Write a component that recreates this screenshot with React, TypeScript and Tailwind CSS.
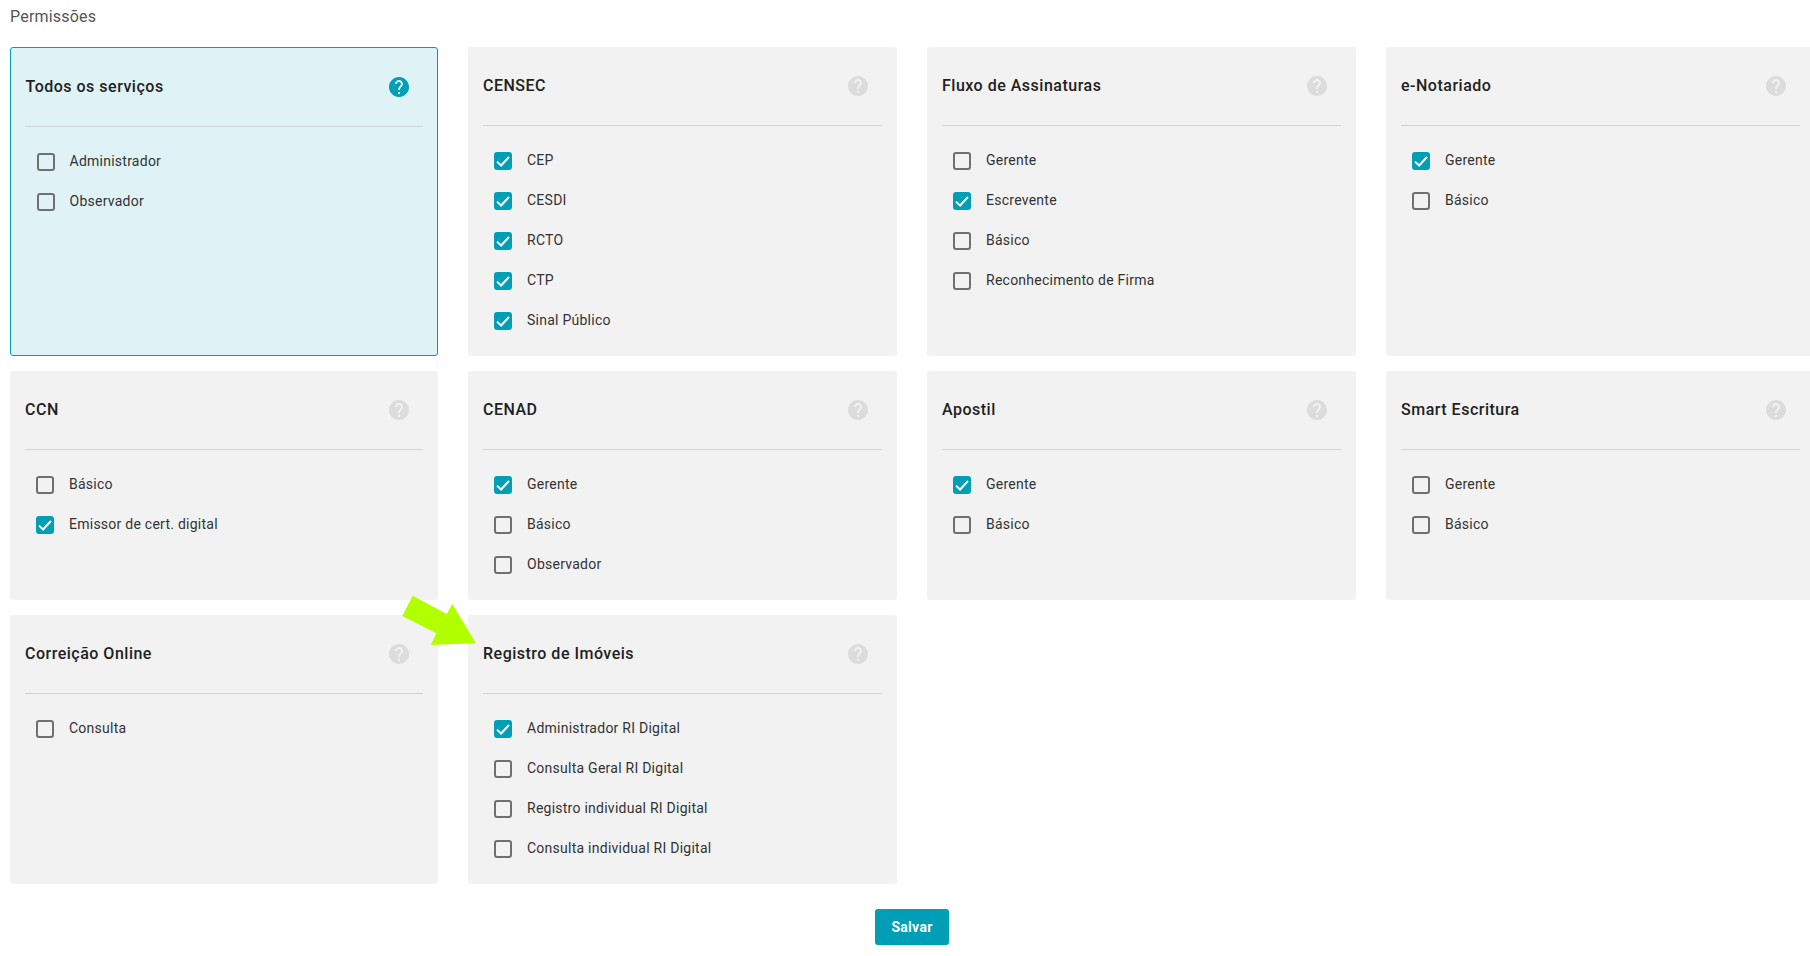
const helpIcon = "M12 2C6.48 2 2 6.48 2 12s4.48 10 10 10 10-4.48 10-10S17.52 2 12 2zm1 17h-2v-2h2v2zm2.07-7.75l-.9.92C13.45 12.9 13 13.5 13 15h-2v-.5c0-1.1.45-2.1 1.17-2.83l1.24-1.26c.37-.36.59-.86.59-1.41 0-1.1-.9-2-2-2s-2 .9-2 2H8c0-2.21 1.79-4 4-4s4 1.79 4 4c0 .88-.36 1.68-.93 2.25z";

type Item = { label: string; checked?: boolean };
type Service = { title: string; items: Item[]; active?: boolean };

const services: Service[] = [
	{ title: "Todos os serviços", active: true, items: [{ label: "Administrador" }, { label: "Observador" }] },
	{
		title: "CENSEC",
		items: [
			{ label: "CEP", checked: true },
			{ label: "CESDI", checked: true },
			{ label: "RCTO", checked: true },
			{ label: "CTP", checked: true },
			{ label: "Sinal Público", checked: true },
		],
	},
	{
		title: "Fluxo de Assinaturas",
		items: [{ label: "Gerente" }, { label: "Escrevente", checked: true }, { label: "Básico" }, { label: "Reconhecimento de Firma" }],
	},
	{ title: "e-Notariado", items: [{ label: "Gerente", checked: true }, { label: "Básico" }] },
	{ title: "CCN", items: [{ label: "Básico" }, { label: "Emissor de cert. digital", checked: true }] },
	{ title: "CENAD", items: [{ label: "Gerente", checked: true }, { label: "Básico" }, { label: "Observador" }] },
	{ title: "Apostil", items: [{ label: "Gerente", checked: true }, { label: "Básico" }] },
	{ title: "Smart Escritura", items: [{ label: "Gerente" }, { label: "Básico" }] },
	{ title: "Correição Online", items: [{ label: "Consulta" }] },
	{
		title: "Registro de Imóveis",
		items: [
			{ label: "Administrador RI Digital", checked: true },
			{ label: "Consulta Geral RI Digital" },
			{ label: "Registro individual RI Digital" },
			{ label: "Consulta individual RI Digital" },
		],
	},
];

function Checkbox(props: { checked?: boolean }) {
	if (props.checked) {
		return (
			<span className="flex h-[18px] w-[18px] shrink-0 items-center justify-center rounded-[3px] bg-[#009fb5]">
				<svg width="18" height="18" viewBox="0 0 18 18" fill="none">
					<path d="M3 9.6 7.1 13.5 15 5" stroke="#fff" strokeWidth="2" />
				</svg>
			</span>
		);
	}
	return <span className="h-[18px] w-[18px] shrink-0 rounded-[3px] border-2 border-[#707070]" />;
}

function Card(props: { service: Service }) {
	const { service } = props;
	return (
		<div
			className={
				service.active
					? "rounded-[3px] border border-[#009fb5] bg-[#dff3f7] px-[14px] pb-[13.5px]"
					: "rounded-[3px] bg-[#f2f2f2] px-[15px] pb-[14.5px]"
			}
		>
			<div className="flex h-[79px] items-center justify-between border-b border-[#d4d4d4] pr-[12px]">
				<h3 className={service.active ? "pl-[0.5px] text-base font-medium tracking-[0.5px] text-[#212121]" : "text-base font-medium tracking-[0.5px] text-[#212121]"}>
					{service.title}
				</h3>
				<svg width="24" height="24" viewBox="0 0 24 24" fill={service.active ? "#009fb5" : "#dcdcdc"}>
					<path d={helpIcon} />
				</svg>
			</div>
			<ul className="flex flex-col pt-[15px]">
				{service.items.map((item) => (
					<li
						key={item.label}
						className={
							service.active
								? "flex h-10 items-center gap-[14.5px] pl-[12px] text-sm tracking-[0.25px] text-[#333333]"
								: "flex h-10 items-center gap-[15px] pl-[11px] text-sm tracking-[0.25px] text-[#333333]"
						}
					>
						<Checkbox checked={item.checked} />
						<span className="-translate-y-px">{item.label}</span>
					</li>
				))}
			</ul>
		</div>
	);
}

export default function App() {
	return (
		<div className="relative h-[956px] w-[1810px] overflow-hidden bg-white px-[10px] font-['Roboto',sans-serif]">
			<p className="flex h-[47px] items-start pt-[7px] text-base leading-5 tracking-[0.2px] text-[#555555]">Permissões</p>
			<div className="grid w-[1836px] grid-cols-[428px_429px_429px_429px] items-stretch gap-x-[30px] gap-y-[15.5px]">
				{services.map((service) => (
					<Card key={service.title} service={service} />
				))}
			</div>
			<div className="flex justify-center pl-[14px] pt-[25px]">
				<button className="h-9 w-[74px] rounded-[3px] bg-[#009fb5] text-sm font-bold tracking-[0.3px] text-white">Salvar</button>
			</div>
			<svg className="absolute left-[400px] top-[594px]" width="80" height="54" viewBox="400 594 80 54">
				<polygon points="412.7,595.7 446.7,614 452.3,604 476,643.3 430.7,645 436.3,633.3 402.3,616" fill="#b2ff00" />
			</svg>
		</div>
	);
}
